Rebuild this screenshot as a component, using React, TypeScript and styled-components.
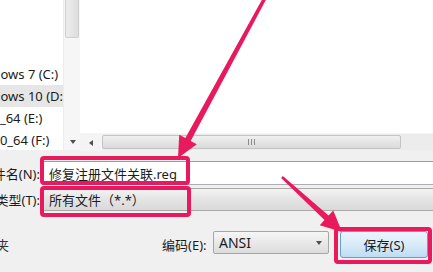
import React from 'react';
import styled, { createGlobalStyle } from 'styled-components';

const GlobalStyle = createGlobalStyle`
  html, body {
    margin: 0;
    padding: 0;
    background: #f0f0f0;
  }
  body {
    font-family: "Noto Sans", "Noto Sans CJK SC", sans-serif;
    font-size: 13px;
    color: #1b1b1b;
  }
`;

const PINK = '#e9195d';

const Page = styled.div`
  position: relative;
  width: 433px;
  height: 272px;
  overflow: hidden;
  background: #f0f0f0;
  display: flex;
  flex-direction: column;
`;

const Browser = styled.div`
  display: flex;
  height: 150px;
  background: #fff;
`;

const NavPane = styled.div`
  width: 63px;
  padding-top: 63px;
  overflow: hidden;
  display: flex;
  flex-direction: column;
`;

// the tree is scrolled to the right, so its left part is out of view
const NavItem = styled.div<{ $selected?: boolean }>`
  height: 22px;
  flex-shrink: 0;
  display: flex;
  align-items: center;
  white-space: nowrap;
  background: ${(p) => (p.$selected ? '#e6e6e6' : 'transparent')};
  span {
    flex-shrink: 0;
    margin-left: -31px;
  }
`;

const VScroll = styled.div`
  width: 17px;
  display: flex;
  flex-direction: column;
  background: #f6f6f6;
  border-left: 1px solid #ededed;
  box-sizing: border-box;
`;

const VThumb = styled.div`
  height: 37px;
  margin: 0 1px;
  border: 1px solid #cfcfcf;
  border-top: none;
  border-radius: 0 0 2px 2px;
  background: linear-gradient(to right, #ececec, #dedede);
`;

const Spacer = styled.div`
  flex: 1;
`;

const ArrowBtn = styled.div`
  width: 17px;
  height: 17px;
  display: flex;
  align-items: center;
  justify-content: center;
  flex-shrink: 0;
`;

const TriDown = styled.div`
  width: 0;
  height: 0;
  border-left: 3.5px solid transparent;
  border-right: 3.5px solid transparent;
  border-top: 4px solid #505050;
`;

const TriLeft = styled.div`
  width: 0;
  height: 0;
  border-top: 3.5px solid transparent;
  border-bottom: 3.5px solid transparent;
  border-right: 4px solid #505050;
`;

const FileArea = styled.div`
  flex: 1;
  display: flex;
  flex-direction: column;
`;

const FileList = styled.div`
  flex: 1;
  background: #fff;
`;

const HScroll = styled.div`
  height: 17px;
  display: flex;
  align-items: stretch;
  background: #ececec;
  border-top: 1px solid #f6f6f6;
  box-sizing: border-box;
`;

const HLeftBtn = styled(ArrowBtn)`
  width: 22px;
  background: #f4f4f4;
`;

const HThumb = styled.div`
  width: 297px;
  margin: 1px 0;
  border: 1px solid #c4c4c4;
  border-radius: 2px;
  background: linear-gradient(#f0f0f0, #dadada);
  display: flex;
  align-items: center;
  justify-content: center;
`;

const Grip = styled.div`
  width: 7px;
  height: 6px;
  background: repeating-linear-gradient(
    to right,
    #8a8a8a 0 1px,
    transparent 1px 3px
  );
`;

const Form = styled.div`
  display: flex;
  flex-direction: column;
  padding-top: 11px;
`;

const FieldRow = styled.div`
  display: flex;
  align-items: center;
  gap: 2px;
  height: 24px;
  margin-bottom: 2px;
`;

const Label = styled.div`
  width: 40px;
  overflow: hidden;
  display: flex;
  justify-content: flex-end;
  white-space: nowrap;
  span {
    flex-shrink: 0;
  }
`;

const TextInput = styled.div`
  flex: 1;
  height: 24px;
  margin-right: -10px;
  box-sizing: border-box;
  border: 1px solid #abadb3;
  border-top-color: #9a9ca3;
  background: #fff;
  display: flex;
  align-items: center;
  padding-left: 6px;
  white-space: nowrap;
`;

const Combo = styled(TextInput)`
  height: 23px;
  border-color: #a9a9a9;
  border-radius: 2px;
  background: linear-gradient(#f3f3f3, #e4e4e4 50%, #d9d9d9);
`;

const Footer = styled.div`
  display: flex;
  align-items: center;
  height: 27px;
  margin-top: 18px;
`;

const Collapse = styled.div`
  width: 9px;
  overflow: hidden;
  display: flex;
  justify-content: flex-end;
  white-space: nowrap;
  color: #333;
  span {
    flex-shrink: 0;
  }
`;

const EncLabel = styled.div`
  margin-left: 153px;
  width: 51px;
  white-space: nowrap;
`;

const Select = styled.div`
  align-self: flex-start;
  width: 116px;
  height: 23px;
  box-sizing: border-box;
  border: 1px solid #a6a6a6;
  border-radius: 2px;
  background: linear-gradient(#f6f6f6, #e9e9e9 50%, #dcdcdc);
  display: flex;
  align-items: center;
  padding: 0 6px 0 5px;
`;

const SelectText = styled.span`
  flex: 1;
  font-size: 14px;
`;

const SaveButton = styled.button`
  margin-left: 11px;
  width: 88px;
  height: 27px;
  box-sizing: border-box;
  border: 1px solid #6d9cc4;
  border-radius: 3px;
  background: linear-gradient(#eaf4fc, #d9ebf9 50%, #bfdcf2);
  font: inherit;
  color: #1b1b1b;
  padding: 0;
`;

const Overlay = styled.svg`
  position: absolute;
  left: 0;
  top: 0;
  pointer-events: none;
`;

type Pt = [number, number];

// tapered arrow polygon: thin tail, wider shaft near head, wide head
const arrowPoints = (tail: Pt, tip: Pt, tailW: number, shaftW: number, headL: number, headW: number) => {
  const dx = tip[0] - tail[0];
  const dy = tip[1] - tail[1];
  const len = Math.hypot(dx, dy);
  const ux = dx / len;
  const uy = dy / len;
  const nx = -uy;
  const ny = ux;
  const bx = tip[0] - ux * headL;
  const by = tip[1] - uy * headL;
  const pts: Pt[] = [
    [tail[0] + (nx * tailW) / 2, tail[1] + (ny * tailW) / 2],
    [bx + (nx * shaftW) / 2, by + (ny * shaftW) / 2],
    [bx + (nx * headW) / 2, by + (ny * headW) / 2],
    tip,
    [bx - (nx * headW) / 2, by - (ny * headW) / 2],
    [bx - (nx * shaftW) / 2, by - (ny * shaftW) / 2],
    [tail[0] - (nx * tailW) / 2, tail[1] - (ny * tailW) / 2]
  ];
  return pts.map((p) => p.join(',')).join(' ');
};

const Annotations = () => (
  <Overlay width={433} height={272} viewBox="0 0 433 272">
    <g fill="none" stroke={PINK} strokeWidth={4} strokeLinejoin="round">
      <rect x={42} y={158} width={146} height={25} rx={2} />
      <rect x={42} y={188} width={147} height={27} rx={2} />
      <rect x={336} y={229} width={94} height={33} rx={2} />
    </g>
    <g fill={PINK}>
      <polygon points={arrowPoints([266, -4], [178, 158], 3.5, 6, 21, 20)} />
      <polygon points={arrowPoints([282, 177], [342, 232], 2.5, 6, 21, 20)} />
    </g>
  </Overlay>
);

const App = () => {
  return (
    <Page>
      <GlobalStyle />
      <Browser>
        <NavPane>
          <NavItem>
            <span>Windows 7 (C:)</span>
          </NavItem>
          <NavItem $selected>
            <span>Windows 10 (D:)</span>
          </NavItem>
          <NavItem>
            <span>Win8_64 (E:)</span>
          </NavItem>
          <NavItem>
            <span>Win10_64 (F:)</span>
          </NavItem>
        </NavPane>
        <VScroll>
          <VThumb />
          <Spacer />
          <ArrowBtn>
            <TriDown />
          </ArrowBtn>
        </VScroll>
        <FileArea>
          <FileList />
          <HScroll>
            <HLeftBtn>
              <TriLeft />
            </HLeftBtn>
            <HThumb>
              <Grip />
            </HThumb>
          </HScroll>
        </FileArea>
      </Browser>
      <Form>
        <FieldRow>
          <Label>
            <span>文件名(N):</span>
          </Label>
          <TextInput>修复注册文件关联.reg</TextInput>
        </FieldRow>
        <FieldRow>
          <Label>
            <span>保存类型(T):</span>
          </Label>
          <Combo>所有文件（*.*）</Combo>
        </FieldRow>
        <Footer>
          <Collapse>
            <span>隐藏文件夹</span>
          </Collapse>
          <EncLabel>编码(E):</EncLabel>
          <Select>
            <SelectText>ANSI</SelectText>
            <TriDown />
          </Select>
          <SaveButton>保存(S)</SaveButton>
        </Footer>
      </Form>
      <Annotations />
    </Page>
  );
};

export default App;
